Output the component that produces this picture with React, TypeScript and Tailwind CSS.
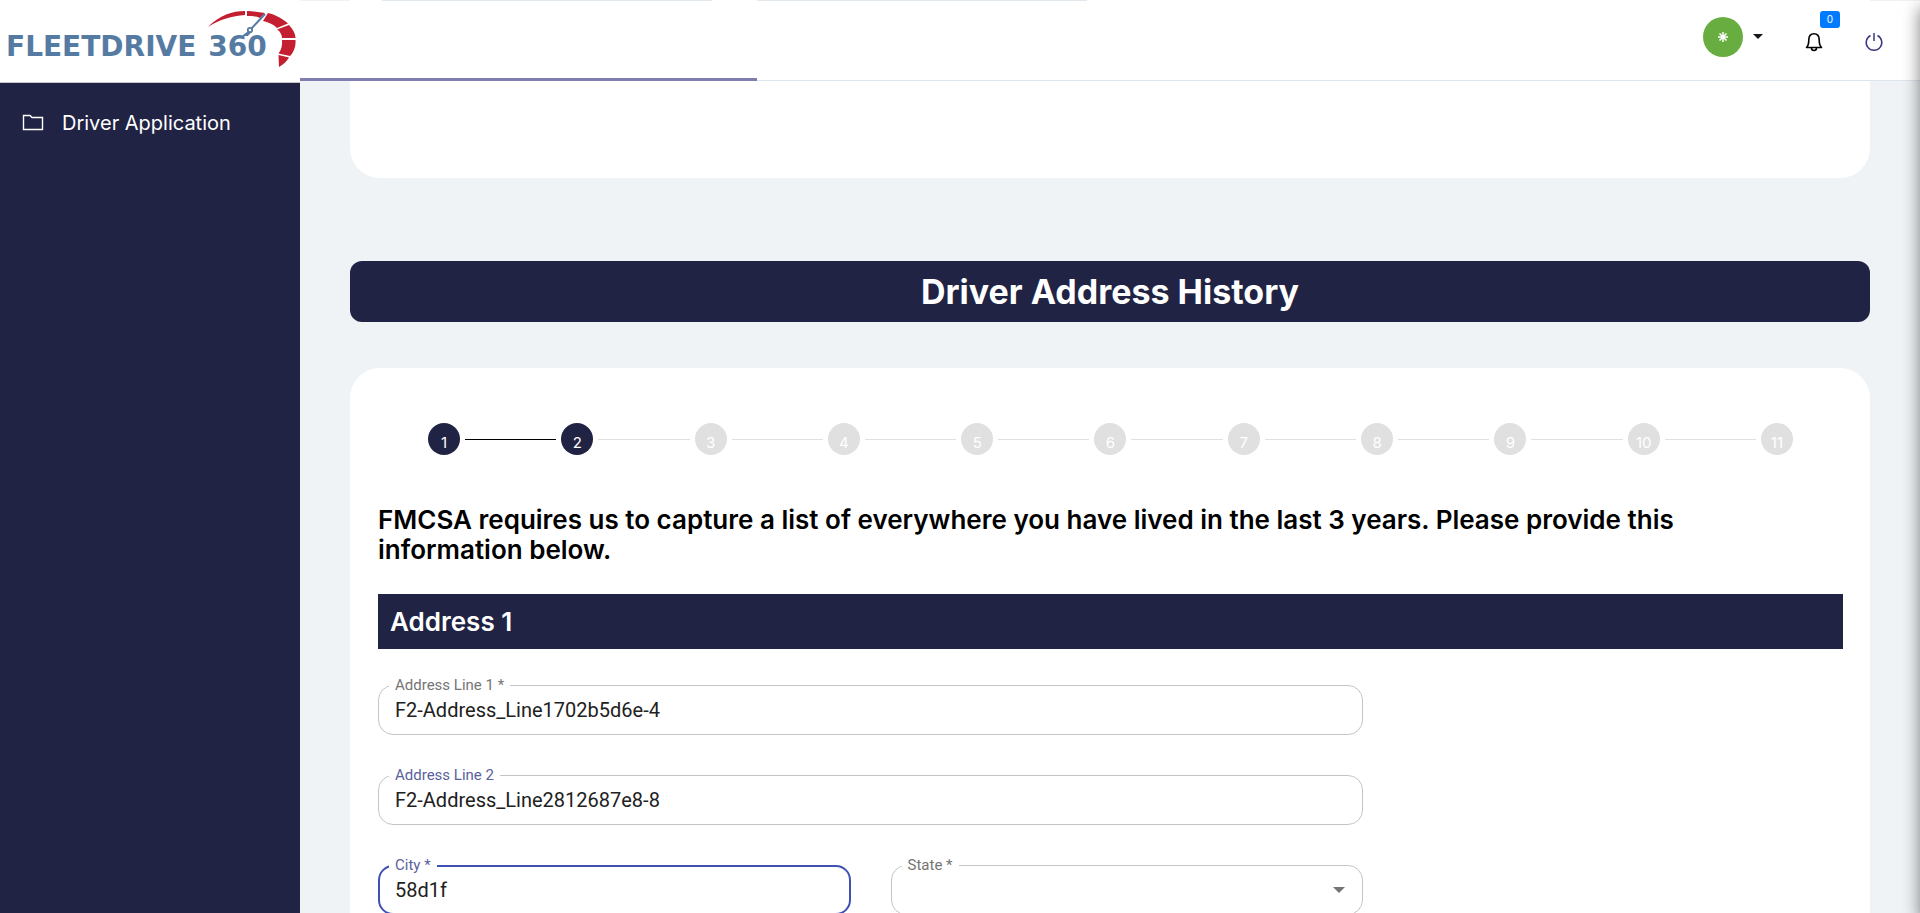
import { useState } from "react";
import type { ReactNode } from "react";

const STEPS = [1, 2, 3, 4, 5, 6, 7, 8, 9, 10, 11];
const CURRENT_STEP = 2;
const STATES = ["", "Alabama", "California", "Florida", "New York", "Texas"];

function Logo() {
  return (
    <a href="#home" aria-label="FleetDrive 360" className="relative block h-full w-full">
      <span className="flex h-full items-center gap-3 pt-3 pl-1.5 font-['DejaVu_Sans',sans-serif] text-[28px] leading-8 font-bold whitespace-nowrap text-[#567ba3]">
        <span>FLEETDRIVE</span>
        <span>360</span>
      </span>
      <svg className="absolute top-2.5 right-1 h-[58px] w-[90px]" viewBox="0 0 90 58" aria-hidden="true">
        <path d="M2 17C14 5 26 1 39 1L39 5C26 6 14 9 2 17Z" fill="#c41f30" />
        <path d="M41 1C47 1 53 2 59 3L54 8C49 6 45 6 41 6Z" fill="#c41f30" />
        <path d="M62 3C70 5 77 9 82 13.500L71 18C67 14 62 12 57 11Z" fill="#c41f30" />
        <path d="M83 15C87 19 89.500 24 89.500 28L76 28C76 25 74 21 71 19.500Z" fill="#c41f30" />
        <path d="M89.500 30C90 36 88 42 84 46L72.500 43.500C75.500 40 76.500 35 76 30Z" fill="#c41f30" />
        <path d="M72.500 45L83 47.500C81 51 78 54 73 57Z" fill="#c41f30" />
        <path d="M59 4L45 19" stroke="#567ba3" strokeWidth="2" />
        <path d="M43 21L37 25.500L42 25.500L45 22Z" fill="#567ba3" stroke="#567ba3" />
        <circle cx="44" cy="20" r="2.200" fill="#fff" stroke="#567ba3" strokeWidth="1.800" />
      </svg>
    </a>
  );
}

function Sidebar() {
  return (
    <aside className="z-20 flex w-[300px] shrink-0 flex-col bg-[#212344]">
      <div className="h-[83px] border-b border-[#c8c8cc] bg-white">
        <Logo />
      </div>
      <nav className="pt-5">
        <a href="#driver-application" className="flex h-10 items-center gap-[18px] pl-[22px] text-[20px] text-white">
          <svg className="h-[22px] w-[22px]" viewBox="0 0 22 22" fill="none" stroke="currentColor" strokeWidth="1.400" aria-hidden="true">
            <path d="M1.500 3.500H8L10 5.500H20.500V17.500H1.500Z" />
          </svg>
          Driver Application
        </a>
      </nav>
    </aside>
  );
}

function Header() {
  return (
    <header className="relative z-10 flex h-20 shrink-0 items-center justify-end border-b border-[#dde6ee] bg-white pr-9">
      <button type="button" aria-label="Account" className="mb-2 flex items-center gap-2.5">
        <span className="flex size-10 items-center justify-center rounded-full bg-[#68ad40] text-white">
          <svg className="size-3" viewBox="0 0 12 12" stroke="currentColor" strokeWidth="1.500" aria-hidden="true">
            <path d="M6 1V11M1 6H11M2.500 2.500L9.500 9.500M9.500 2.500L2.500 9.500" />
          </svg>
        </span>
        <svg className="h-[5px] w-2.5" viewBox="0 0 10 5" aria-hidden="true">
          <path d="M0 0H10L5 5Z" fill="#16161d" />
        </svg>
      </button>
      <button type="button" aria-label="Notifications" className="relative mt-0.5 ml-[41px]">
        <svg className="size-5" viewBox="0 0 20 20" fill="none" stroke="#000" strokeWidth="1.600" strokeLinejoin="round" aria-hidden="true">
          <path d="M2.500 15.500C4.500 13.500 4.800 12 4.800 8C4.800 4 6.500 1.700 10 1.700S15.200 4 15.200 8C15.200 12 15.500 13.500 17.500 15.500Z" />
          <path d="M7.500 16C7.500 19.300 12.500 19.300 12.500 16" />
        </svg>
        <span className="absolute -top-[21px] left-4 flex h-[17px] w-5 items-center justify-center rounded-[3px] bg-[#007bff] text-[10px] text-white">
          0
        </span>
      </button>
      <button type="button" aria-label="Log out" className="mt-0.5 ml-10">
        <svg className="size-5" viewBox="0 0 20 20" fill="none" stroke="#3b3a80" strokeWidth="1.500" aria-hidden="true">
          <path d="M6.500 3.500A7.800 7.800 0 1 0 13.500 3.500M10 1V9" />
        </svg>
      </button>
      <div role="progressbar" aria-label="Application progress" aria-valuenow={28} className="absolute -bottom-px left-0 h-[3px] w-[28.2%] bg-[#807eb0]" />
    </header>
  );
}

function Stepper() {
  return (
    <ol className="flex items-center px-[50px]">
      {STEPS.map((step) => (
        <li key={step} className={step > 1 ? "flex min-w-0 flex-1 items-center" : "flex items-center"}>
          {step > 1 && (
            <span className={step <= CURRENT_STEP ? "mx-[5px] h-px flex-1 bg-black" : "mx-[5px] h-px flex-1 bg-[#e0e0e0]"} />
          )}
          <span
            className={
              step <= CURRENT_STEP
                ? "flex size-8 items-center justify-center rounded-full bg-[#212344] pt-2 text-[15px] leading-6 text-white"
                : "flex size-8 items-center justify-center rounded-full bg-[#e0e0e0] pt-2 text-[15px] leading-6 text-white"
            }
          >
            {step}
          </span>
        </li>
      ))}
    </ol>
  );
}

type FieldProps = { id: string; label: string; tone?: string; active?: boolean; children: ReactNode };

function Field({ id, label, tone = "text-[#757575]", active = false, children }: FieldProps) {
  return (
    <div className="relative h-[50px]">
      <div
        className={
          active
            ? "pointer-events-none absolute inset-0 rounded-[15px] border-2 border-[#3f51b5]"
            : "pointer-events-none absolute inset-0 rounded-[15px] border border-[#c4c4c4]"
        }
      />
      <label htmlFor={id} className={`absolute -top-2.5 left-[11px] bg-white px-1.5 text-[15px] leading-5 ${tone}`}>
        {label}
      </label>
      {children}
    </div>
  );
}

const CONTROL = "h-full w-full appearance-none rounded-[15px] bg-transparent px-[17px] text-[20px] text-[#212121] outline-none";

export default function App() {
  const [line1, setLine1] = useState("F2-Address_Line1702b5d6e-4");
  const [line2, setLine2] = useState("F2-Address_Line2812687e8-8");
  const [city, setCity] = useState("58d1f");
  const [state, setState] = useState("");

  return (
    <div className="relative flex h-screen overflow-hidden bg-[#eff3f6] font-['Inter',sans-serif]">
      <Sidebar />
      <div className="flex min-w-0 flex-1 flex-col">
        <div className="flex h-px shrink-0 px-[50px]">
          <div className="flex flex-1 gap-[45px] bg-white pl-8">
            <div className="w-[330px] bg-[#e1e8ee]" />
            <div className="w-[330px] bg-[#e1e8ee]" />
          </div>
        </div>
        <Header />
        <main className="min-h-0 flex-1 overflow-hidden px-[50px]">
          <div className="h-[97px] rounded-b-[30px] bg-white" />
          <h1 className="mt-[83px] flex h-[61px] items-center justify-center rounded-xl bg-[#212344] text-[34px] font-bold text-white">
            Driver Address History
          </h1>
          <section className="mt-[46px] rounded-t-[30px] bg-white pt-[55px] pr-[27px] pb-20 pl-7">
            <Stepper />
            <p className="mt-[50px] pr-12 text-[26px] leading-[30px] font-semibold text-black">
              FMCSA requires us to capture a list of everywhere you have lived in the last 3 years. Please provide this
              information below.
            </p>
            <h2 className="mt-[29px] flex h-[55px] items-center bg-[#212344] px-3 text-[26px] font-semibold text-white">
              Address 1
            </h2>
            <form className="mt-9 grid w-[985px] max-w-full grid-cols-2 gap-10 font-['Roboto',sans-serif]">
              <div className="col-span-2">
                <Field id="line1" label="Address Line 1 *">
                  <input id="line1" value={line1} onChange={(e) => setLine1(e.target.value)} className={CONTROL} />
                </Field>
              </div>
              <div className="col-span-2">
                <Field id="line2" label="Address Line 2" tone="text-[#5a629c]">
                  <input id="line2" value={line2} onChange={(e) => setLine2(e.target.value)} className={CONTROL} />
                </Field>
              </div>
              <Field id="city" label="City *" tone="text-[#5a629c]" active>
                <input id="city" value={city} onChange={(e) => setCity(e.target.value)} className={CONTROL} />
              </Field>
              <Field id="state" label="State *">
                <select id="state" value={state} onChange={(e) => setState(e.target.value)} className={CONTROL}>
                  {STATES.map((name) => (
                    <option key={name} value={name}>
                      {name}
                    </option>
                  ))}
                </select>
                <svg className="pointer-events-none absolute top-[22px] right-[18px] h-1.5 w-3" viewBox="0 0 12 6" aria-hidden="true">
                  <path d="M0 0H12L6 6Z" fill="#757575" />
                </svg>
              </Field>
            </form>
          </section>
        </main>
      </div>
      <aside aria-hidden="true" className="absolute top-0 bottom-0 left-full z-30 w-20 shadow-[0_8px_16px_rgba(0,0,0,0.5)]" />
    </div>
  );
}
